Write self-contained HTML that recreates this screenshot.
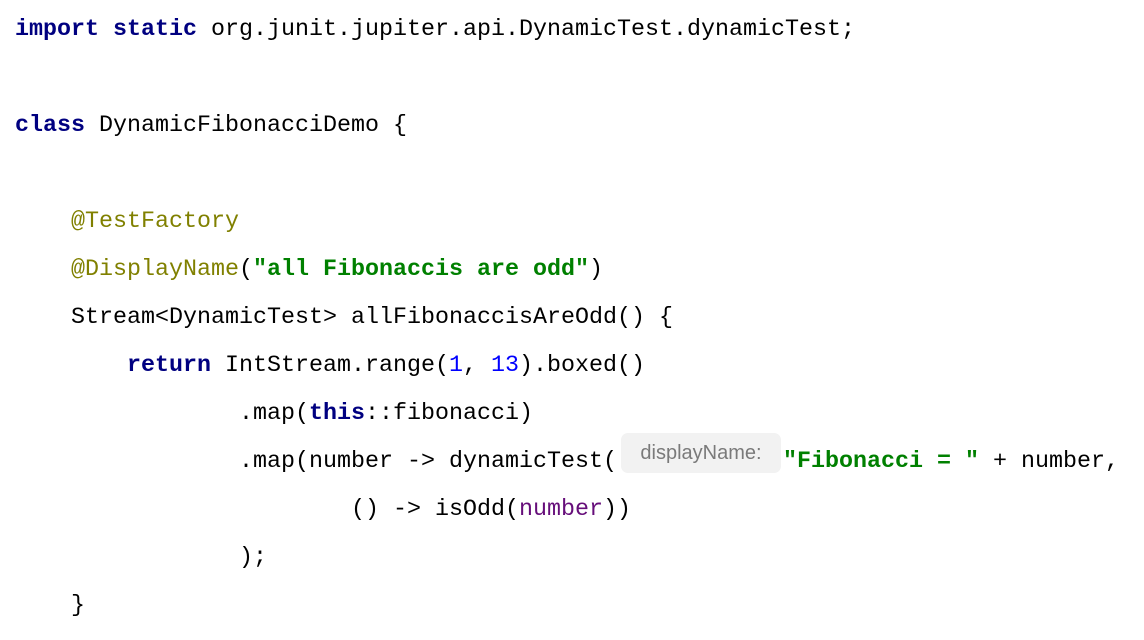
<!DOCTYPE html>
<html><head><meta charset="utf-8"><style>
body{margin:0;background:#fff;width:1144px;height:640px;overflow:hidden}
pre{margin:0;position:absolute;left:15px;top:6px;font-family:"Liberation Mono",monospace;font-size:23.33px;line-height:48px;color:#000}
.k{color:#000080;font-weight:bold}
.a{color:#808000}
.s{color:#008000;font-weight:bold}
.n{color:#0000ff}
.p{color:#660e7a}
.h{display:inline-block;box-sizing:border-box;width:160px;margin:0 2px 0 4px;height:40px;line-height:40px;vertical-align:middle;background:#f2f2f2;border-radius:7px;color:#7a7a7a;font-family:"Liberation Sans",sans-serif;font-size:20px;text-align:center;position:relative;top:-8px}
</style></head><body>
<pre><span class="k">import static</span> org.junit.jupiter.api.DynamicTest.dynamicTest;

<span class="k">class</span> DynamicFibonacciDemo {

    <span class="a">@TestFactory</span>
    <span class="a">@DisplayName</span>(<span class="s">"all Fibonaccis are odd"</span>)
    Stream&lt;DynamicTest&gt; allFibonaccisAreOdd() {
        <span class="k">return</span> IntStream.range(<span class="n">1</span>, <span class="n">13</span>).boxed()
                .map(<span class="k">this</span>::fibonacci)
                .map(number -&gt; dynamicTest(<span class="h">displayName:</span><span class="s">"Fibonacci = "</span> + number,
                        () -&gt; isOdd(<span class="p">number</span>))
                );
    }</pre>
</body></html>
